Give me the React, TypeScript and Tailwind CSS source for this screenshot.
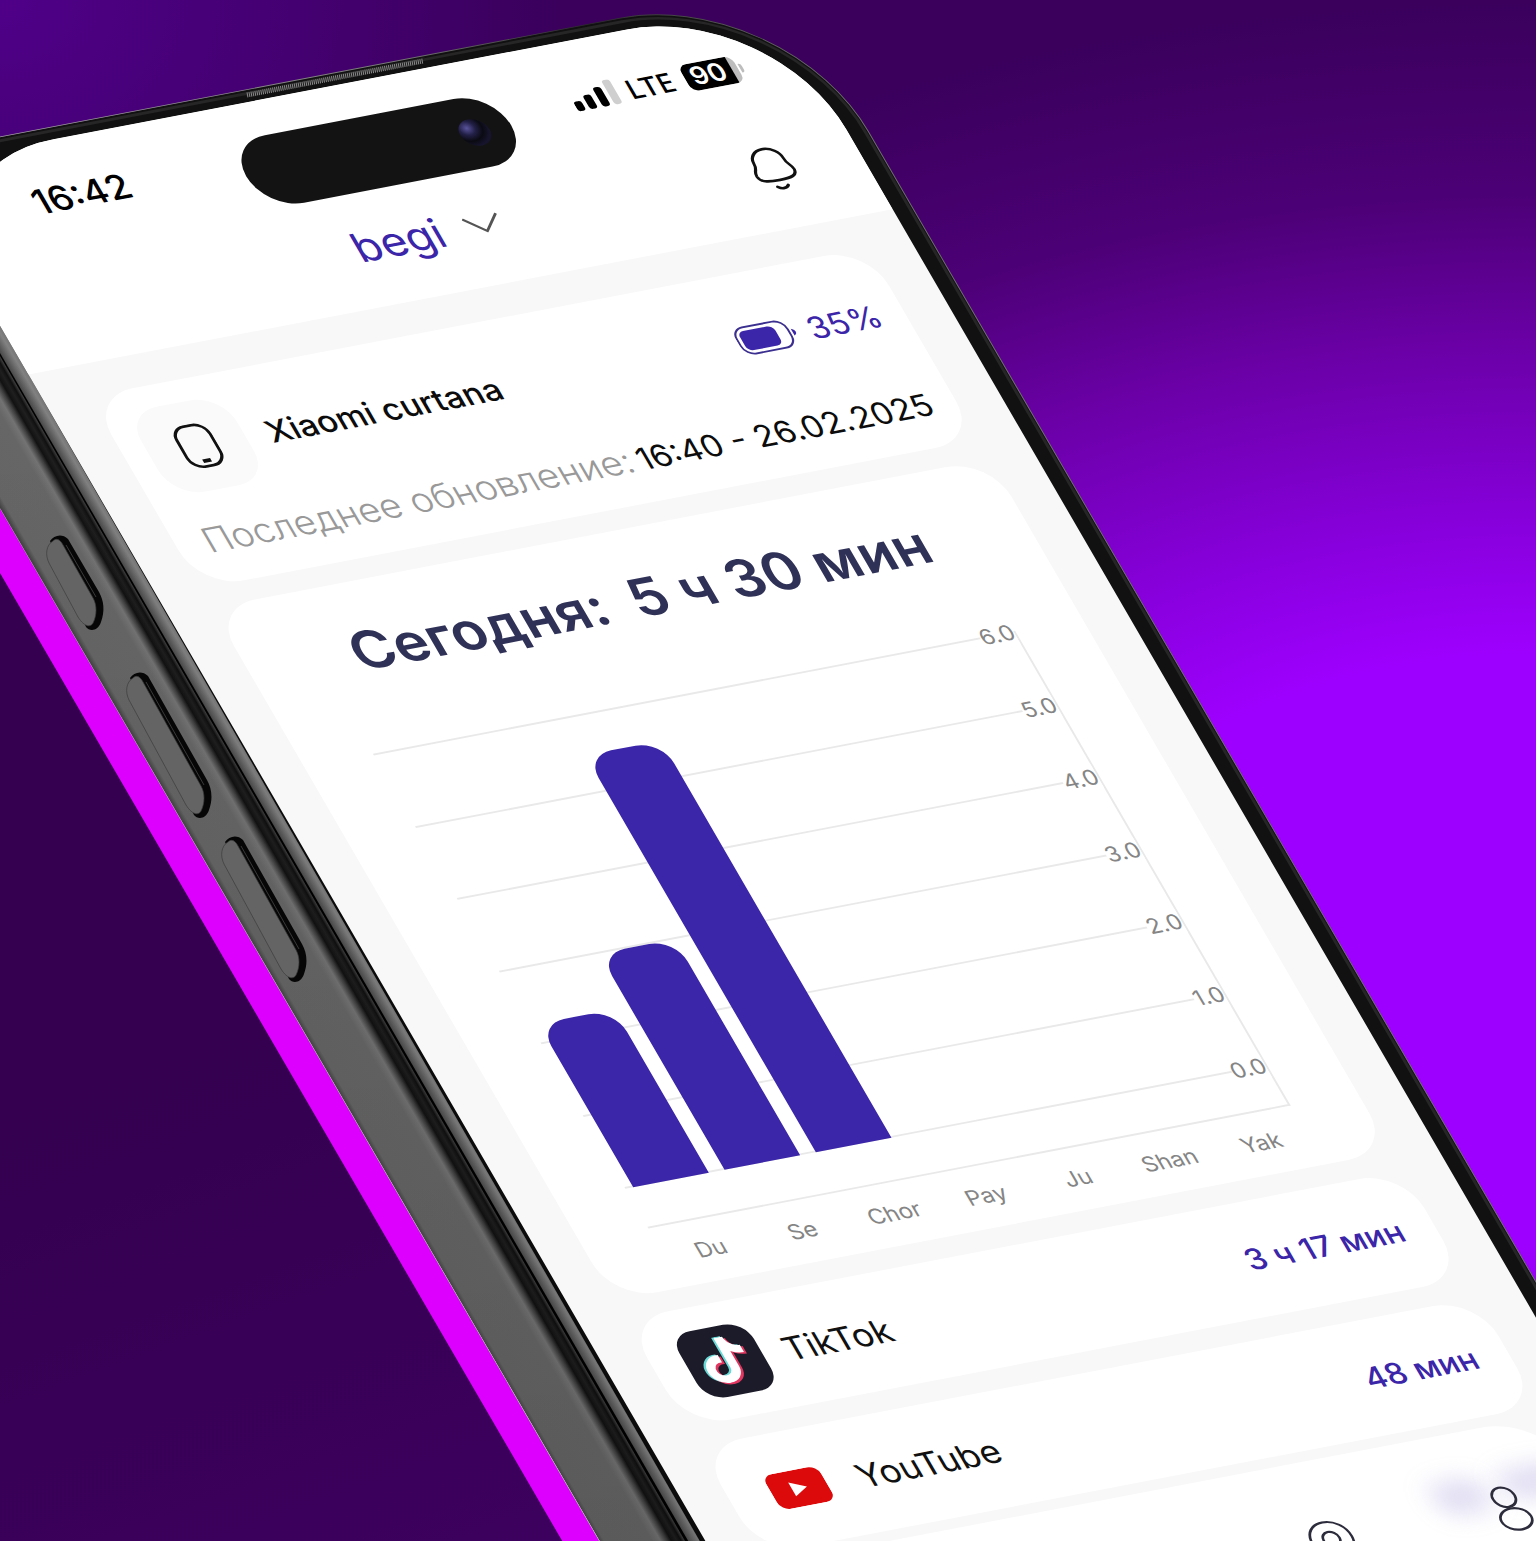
import type { ReactNode } from "react";
import { FaTiktok } from "react-icons/fa";

const gridValues = ["6.0", "5.0", "4.0", "3.0", "2.0", "1.0", "0.0"];

const days = [
  { name: "Du", hours: 2.26 },
  { name: "Se", hours: 2.98 },
  { name: "Chor", hours: 5.48 },
  { name: "Pay", hours: 0 },
  { name: "Ju", hours: 0 },
  { name: "Shan", hours: 0 },
  { name: "Yak", hours: 0 },
];

function SideButton({ x, y, long }: { x: number; y: number; long?: boolean }) {
  const ex = long ? 28 : 0;
  const ey = long ? 51 : 0;
  const body = `M-8 6C-4 0 4 -2 10 4L${41 + ex} ${57 + ey}C${46 + ex} ${66 + ey} ${47 + ex} ${76 + ey} ${43 + ex} ${87 + ey}C${40 + ex} ${96 + ey} ${32 + ex} ${97 + ey} ${28 + ex} ${92 + ey}Z`;
  const face = `M-5 6C-12 10 -13 20 -9 28L${20 + ex} ${82 + ey}C${27 + ex} ${93 + ey} ${33 + ex} ${92 + ey} ${35 + ex} ${88 + ey}C${39 + ex} ${80 + ey} ${39 + ex} ${70 + ey} ${35 + ex} ${63 + ey}L5 10C2 4 -2 3 -5 6Z`;
  return (
    <g transform={`translate(${x} ${y})`}>
      <path d={body} fill="#060606" />
      <path d={face} fill="#646464" stroke="#3c3c3c" strokeWidth="0.7" />
      <path d={`M8 10L${38 + ex} ${62 + ey}`} stroke="#3a3a3a" strokeWidth="1" />
    </g>
  );
}

function Chassis() {
  return (
    <svg className="absolute left-0 top-0 overflow-visible" width="1536" height="1541" fill="none" aria-hidden="true">
      <defs>
        <linearGradient id="rail" gradientUnits="userSpaceOnUse" x1="-219.7" y1="127" x2="-138.4" y2="80">
          <stop offset="0" stopColor="#424242" />
          <stop offset="0.06" stopColor="#666666" />
          <stop offset="0.5" stopColor="#676767" />
          <stop offset="0.58" stopColor="#747474" />
          <stop offset="0.64" stopColor="#3e3e3e" />
          <stop offset="0.68" stopColor="#121212" />
          <stop offset="0.73" stopColor="#1f1f1f" />
          <stop offset="0.77" stopColor="#101010" />
          <stop offset="0.8" stopColor="#3a3a3a" />
          <stop offset="0.81" stopColor="#000000" />
        </linearGradient>
        <linearGradient id="bevel" gradientUnits="userSpaceOnUse" x1="-153.1" y1="88.5" x2="-138.4" y2="80">
          <stop offset="0" stopColor="#484848" />
          <stop offset="0.6" stopColor="#828282" />
          <stop offset="1" stopColor="#6c6c6c" />
        </linearGradient>
        <linearGradient id="shade" x1="0" y1="0" x2="0" y2="1">
          <stop offset="0" stopColor="#000" stopOpacity="0" />
          <stop offset="1" stopColor="#000" stopOpacity="0.18" />
        </linearGradient>
        <linearGradient id="rim" x1="0" y1="0" x2="1" y2="0">
          <stop offset="0" stopColor="#b8b8b8" />
          <stop offset="0.6" stopColor="#7a7a7a" />
          <stop offset="0.8" stopColor="#2a2a2a" />
          <stop offset="1" stopColor="#6f6f6f" />
        </linearGradient>
      </defs>
      <path d="M0 500V573L945 2200H990Z" fill="#de00ff" />
      <g transform="matrix(0.982 -0.188 0.502 0.865 -92 167)">
        <rect x="-97" y="-13" width="996" height="2400" rx="167" fill="#111111" stroke="url(#rim)" strokeWidth="1" />
        <rect x="-94" y="-9" width="990" height="2400" rx="164" stroke="#262626" strokeWidth="3" />
      </g>
      <path d="M245 96L251 91L425 57L421 63L252 96Z" fill="#1c1c1c" />
      <path d="M247 95L423 61" stroke="#8a8a8a" strokeWidth="5" strokeDasharray="1 1" />
      <path d="M0 318V508L983 2200H1089Z" fill="url(#rail)" />
      <path d="M0 320V353L1070 2200H1085Z" fill="url(#bevel)" />
      <path d="M0 318V325L1079 2200H1092Z" fill="#0b0b0b" />
      <path d="M0 320V508L983 2200H1080Z" fill="url(#shade)" />
      <SideButton x={58} y={535} />
      <SideButton x={138} y={672} long />
      <SideButton x={233} y={836} long />
    </svg>
  );
}

function StatusBar() {
  return (
    <div className="grid grid-cols-[1fr_270px_1fr] items-start text-black">
      <span className="pl-[96px] text-[37px] font-medium leading-[50px]">16:42</span>
      <span className="flex h-[78px] items-center justify-end rounded-full bg-[#131313] pr-[22px]">
        <span className="size-[30px] rounded-full bg-[radial-gradient(circle_at_32%_30%,#5a549c_0,#232048_26%,#0a0a12_50%,#17152e_72%,#0c0c0c_100%)]" />
      </span>
      <div className="flex h-[50px] items-center justify-end pr-[62px]">
        <svg width="46" height="30" viewBox="0 0 46 30" aria-label="Signal" className="mr-[10px]">
          <rect x="0" y="17" width="8" height="11" rx="3" />
          <rect x="12" y="12" width="8" height="16" rx="3" />
          <rect x="25" y="6" width="8" height="22" rx="3" />
          <rect x="37" y="0" width="8" height="28" rx="3" fill="#cfcfcf" />
        </svg>
        <span className="font-['Noto_Sans',sans-serif] text-[29px] font-medium leading-[50px]">LTE</span>
        <span className="ml-[12px] flex h-[30px] w-[54px] items-center overflow-hidden rounded-[8px] bg-[#bdbdbd]">
          <span className="flex h-full w-[48px] items-center justify-center bg-black text-[27px] font-semibold text-white">90</span>
        </span>
        <span className="ml-[2px] h-[10px] w-[3px] rounded-r-full bg-[#bdbdbd]" />
      </div>
    </div>
  );
}

function BellIcon() {
  return (
    <svg width="54" height="54" viewBox="0 0 24 24" fill="none" stroke="#111" strokeWidth="1.3" strokeLinecap="round" strokeLinejoin="round" aria-hidden="true">
      <path d="M12 17.85c5.64 0 8.25-.73 8.5-3.63 0-2.9-1.82-2.71-1.82-6.27C18.68 5.16 16.05 2 12 2S5.32 5.16 5.32 7.95c0 3.56-1.82 3.37-1.82 6.27.25 2.91 2.86 3.63 8.5 3.63Z" />
      <path d="M14.39 20.86c-1.36 1.51-3.49 1.53-4.87 0" />
    </svg>
  );
}

function DeviceCard() {
  return (
    <section className="rounded-[44px] bg-white px-[24px] pb-[27px] pt-[24px]">
      <div className="flex items-center">
        <span className="flex size-[98px] items-center justify-center rounded-[32px] bg-[#fafafa]">
          <svg width="40" height="50" viewBox="0 0 40 50" fill="none" stroke="#111" aria-hidden="true">
            <rect x="4" y="2" width="34" height="46" rx="13" strokeWidth="3" />
            <path d="M17 42H25" strokeWidth="4" />
          </svg>
        </span>
        <h2 className="ml-[22px] text-[33px] font-medium leading-[40px] text-[#0c0c0c]">Xiaomi curtana</h2>
        <span className="ml-auto flex items-center text-[33px] leading-[40px] text-[#3b25a8]">
          <svg width="62" height="34" viewBox="0 0 62 34" fill="none" aria-hidden="true" className="mr-[10px]">
            <rect x="1" y="2" width="52" height="30" rx="11" stroke="#3b2f8f" strokeWidth="2" />
            <rect x="5" y="6" width="36" height="22" rx="6" fill="#3b25a8" />
            <path d="M56 13v8c2-1 3-2 3-4s-1-3-3-4Z" fill="#3b25a8" />
          </svg>
          35%
        </span>
      </div>
      <p className="mt-[32px] flex items-baseline justify-between whitespace-nowrap pl-[4px] text-[33px] leading-[40px]">
        <span className="text-[37px] font-light text-[#999999]">Последнее обновление:</span>
        <span className="text-[#0c0c0c]">16:40 - 26.02.2025</span>
      </p>
    </section>
  );
}

function ChartCard() {
  return (
    <section className="rounded-[44px] bg-white pb-[19px] pl-[70px] pr-[68px] pt-[40px]">
      <h1 className="flex justify-center gap-[26px] whitespace-nowrap text-[57px] font-semibold leading-[72px] text-[#2f3157]">
        <span>Сегодня:</span>
        <span>5 ч 30 мин</span>
      </h1>
      <div className="relative mt-[72px] border-b-2 border-r-2 border-[#e9e9e9] pb-[44px]">
        <div className="flex h-[503px] flex-col justify-between">
          {gridValues.map((value) => (
            <div key={value} className="flex h-[2px] items-center bg-[#e9e9e9]">
              <span className="ml-auto bg-white text-[23px] leading-[28px] text-[#858585]">{value}</span>
            </div>
          ))}
        </div>
        <div className="absolute inset-x-0 top-0 grid h-[503px] grid-cols-7 items-end">
          {days.map((day) => (
            <div
              key={day.name}
              className="mx-[8px] rounded-t-[26px] bg-[#3b25a8]"
              style={{ height: `${(day.hours / 6) * 100}%` }}
            />
          ))}
        </div>
      </div>
      <div className="mt-[17px] grid grid-cols-7 text-center text-[23px] leading-[32px] text-[#858585]">
        {days.map((day) => (
          <span key={day.name}>{day.name}</span>
        ))}
      </div>
    </section>
  );
}

function TikTokLogo() {
  return (
    <span className="relative block size-[76px] rounded-[21px] bg-[#1c1b29]">
      <FaTiktok className="absolute left-[11px] top-[11px] text-[#69d9d6]" size={50} />
      <FaTiktok className="absolute left-[15px] top-[14px] text-[#e0365f]" size={50} />
      <FaTiktok className="absolute left-[13px] top-[12px] text-white" size={50} />
    </span>
  );
}

function YouTubeLogo() {
  return (
    <svg width="56" height="40" viewBox="0 0 56 40" aria-hidden="true">
      <rect width="56" height="40" rx="10" fill="#dc0a0a" />
      <path d="M21 12L36 20L21 28Z" fill="#fff" />
    </svg>
  );
}

function AppRow({ logo, name, time }: { logo: ReactNode; name: string; time: string }) {
  return (
    <li className="flex h-[125px] items-center rounded-[44px] bg-white px-[32px]">
      <span className="flex w-[76px] justify-center">{logo}</span>
      <span className="ml-[22px] text-[35px] leading-[44px] text-[#111]">{name}</span>
      <span className="ml-auto text-[32px] font-medium leading-[44px] text-[#3b25a8]">{time}</span>
    </li>
  );
}

function BottomNav() {
  return (
    <nav className="absolute inset-x-[44px] bottom-[108px] flex h-[180px] items-center justify-end gap-[126px] rounded-[64px] bg-white pr-[54px]">
      <span className="absolute right-[92px] top-[48px] h-[40px] w-[56px] rounded-full bg-[#8d80cf]/25 blur-[12px]" />
      <span className="absolute right-[2px] top-[48px] h-[36px] w-[76px] rounded-full bg-[#8d80cf]/25 blur-[12px]" />
      <button type="button" aria-label="Location" className="relative">
        <svg width="54" height="54" viewBox="0 0 54 54" fill="none" stroke="#2c2c3c" strokeWidth="2.5">
          <path d="M27 49C21 49 7 38 7 24C7 12 16 4 27 4S47 12 47 24C47 38 33 49 27 49Z" />
          <circle cx="27" cy="23" r="8" />
        </svg>
      </button>
      <button type="button" aria-label="Profile" className="relative">
        <svg width="54" height="54" viewBox="0 0 54 54" fill="none" stroke="#2c2c3c" strokeWidth="2.5">
          <circle cx="27" cy="14" r="11" />
          <ellipse cx="27" cy="39" rx="15" ry="12" />
        </svg>
      </button>
    </nav>
  );
}

export default function App() {
  return (
    <main className="relative min-h-screen overflow-hidden bg-[#38005a] bg-[radial-gradient(ellipse_560px_460px_at_0_0,#4f0088_0,transparent_100%),radial-gradient(ellipse_1500px_920px_at_100%_950px,#9e00ff_0,#9e00ff_32%,#8800dd_46%,#6a00a6_66%,#4c0076_82%,#3a005c_103%)] font-['Inter','Noto_Sans',sans-serif]">
      <div className="absolute left-0 top-[573px] h-full w-[700px] bg-[linear-gradient(160deg,#34004f_30%,#3f0062_75%)]" />
      <Chassis />
      <div className="absolute left-0 top-0 flex h-[1913px] w-[880px] origin-top-left flex-col overflow-hidden rounded-[148px] bg-[#f8f8f8] [transform:matrix(0.982,-0.188,0.502,0.865,-92,167)]">
        <header className="h-[240px] shrink-0 bg-white pt-[38px]">
          <StatusBar />
          <div className="mt-[31px] grid grid-cols-[1fr_auto_1fr] items-center">
            <button type="button" className="col-start-2 flex items-center gap-[24px] text-[44px] leading-[54px] text-[#3b25a8]">
              begi
              <svg width="36" height="20" viewBox="0 0 36 20" fill="none" stroke="#555" strokeWidth="2.5" aria-hidden="true">
                <path d="M1 1L18 18L35 1" />
              </svg>
            </button>
            <button type="button" aria-label="Notifications" className="mr-[61px] justify-self-end">
              <BellIcon />
            </button>
          </div>
        </header>
        <div className="flex flex-col gap-[22px] px-[44px] pt-[35px]">
          <DeviceCard />
          <ChartCard />
          <ul className="flex flex-col gap-[22px]">
            <AppRow logo={<TikTokLogo />} name="TikTok" time="3 ч 17 мин" />
            <AppRow logo={<YouTubeLogo />} name="YouTube" time="48 мин" />
          </ul>
        </div>
        <BottomNav />
      </div>
    </main>
  );
}
